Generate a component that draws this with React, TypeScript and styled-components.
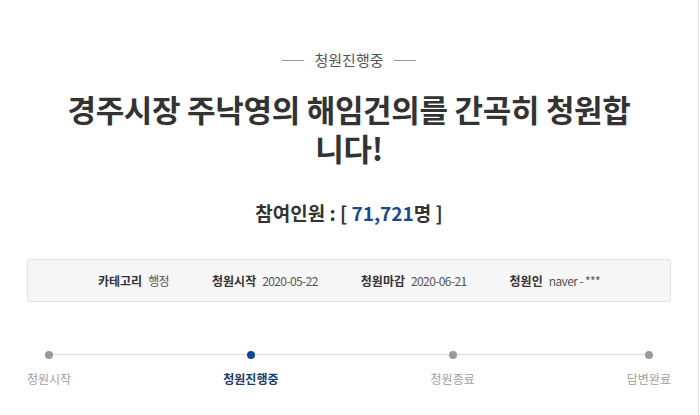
import React from 'react';
import styled, { createGlobalStyle } from 'styled-components';

const GlobalStyle = createGlobalStyle`
  html, body {
    margin: 0;
    padding: 0;
    background: #ffffff;
  }
  body {
    font-family: "Noto Sans CJK KR", "Noto Sans", sans-serif;
    color: #333333;
  }
`;

const Page = styled.div`
  width: 699px;
  height: 415px;
  border-right: 1px solid #e6e6e6;
  padding: 47px 27px 0 27px;
  box-sizing: border-box;
  display: flex;
  flex-direction: column;
  align-items: center;
`;

const Status = styled.div`
  display: flex;
  align-items: center;
  gap: 10px;
  font-size: 15px;
  line-height: 26px;
  color: #555555;
`;

const Dash = styled.span`
  display: block;
  width: 22px;
  height: 1px;
  background: #999999;
`;

const Title = styled.h1`
  margin: 16px 0 0 0;
  max-width: 580px;
  font-size: 31px;
  line-height: 39px;
  font-weight: 700;
  text-align: center;
  color: #333333;
  letter-spacing: -0.3px;
`;

const Count = styled.div`
  margin-top: 32px;
  font-size: 19px;
  line-height: 28px;
  font-weight: 700;
  color: #333333;
`;

const CountNumber = styled.span`
  color: #1b4a8a;
`;

const InfoBox = styled.ul`
  margin: 32px 0 0 0;
  padding: 0;
  list-style: none;
  align-self: stretch;
  height: 43px;
  box-sizing: border-box;
  background: #f6f6f6;
  border: 1px solid #e2e2e2;
  border-radius: 3px;
  display: flex;
  justify-content: center;
  align-items: center;
  gap: 43px;
  font-size: 12px;
`;

const InfoItem = styled.li`
  display: flex;
  align-items: center;
  gap: 6px;
`;

const InfoLabel = styled.span`
  font-weight: 700;
  color: #333333;
`;

const InfoValue = styled.span`
  color: #555555;
  letter-spacing: -0.6px;
`;

const Steps = styled.ol`
  margin: 48px 0 0 0;
  padding: 0;
  list-style: none;
  align-self: stretch;
  position: relative;
  display: flex;
  justify-content: space-between;

  &::before {
    content: '';
    position: absolute;
    left: 21px;
    right: 21px;
    top: 4px;
    height: 1px;
    background: #dcdcdc;
  }
`;

const Step = styled.li<{ $active?: boolean }>`
  position: relative;
  display: flex;
  flex-direction: column;
  align-items: center;
  gap: 11px;
  font-size: 12px;
  line-height: 18px;
  font-weight: ${(p) => (p.$active ? 700 : 400)};
  color: ${(p) => (p.$active ? '#1c3b6e' : '#a0a0a0')};
`;

const Dot = styled.span<{ $active?: boolean }>`
  display: block;
  width: 8px;
  height: 8px;
  border-radius: 50%;
  margin-top: 1px;
  background: ${(p) => (p.$active ? '#0c4a92' : '#9a9a9a')};
`;

const info = [
  { label: '카테고리', value: '행정' },
  { label: '청원시작', value: '2020-05-22' },
  { label: '청원마감', value: '2020-06-21' },
  { label: '청원인', value: 'naver - ***' },
];

const steps = [
  { label: '청원시작', active: false },
  { label: '청원진행중', active: true },
  { label: '청원종료', active: false },
  { label: '답변완료', active: false },
];

const App: React.FC = () => (
  <>
    <GlobalStyle />
    <Page>
      <Status>
        <Dash />
        청원진행중
        <Dash />
      </Status>
      <Title>경주시장 주낙영의 해임건의를 간곡히 청원합니다!</Title>
      <Count>
        참여인원 : [ <CountNumber>71,721</CountNumber>명 ]
      </Count>
      <InfoBox>
        {info.map((item) => (
          <InfoItem key={item.label}>
            <InfoLabel>{item.label}</InfoLabel>
            <InfoValue>{item.value}</InfoValue>
          </InfoItem>
        ))}
      </InfoBox>
      <Steps>
        {steps.map((s) => (
          <Step key={s.label} $active={s.active}>
            <Dot $active={s.active} />
            {s.label}
          </Step>
        ))}
      </Steps>
    </Page>
  </>
);

export default App;
